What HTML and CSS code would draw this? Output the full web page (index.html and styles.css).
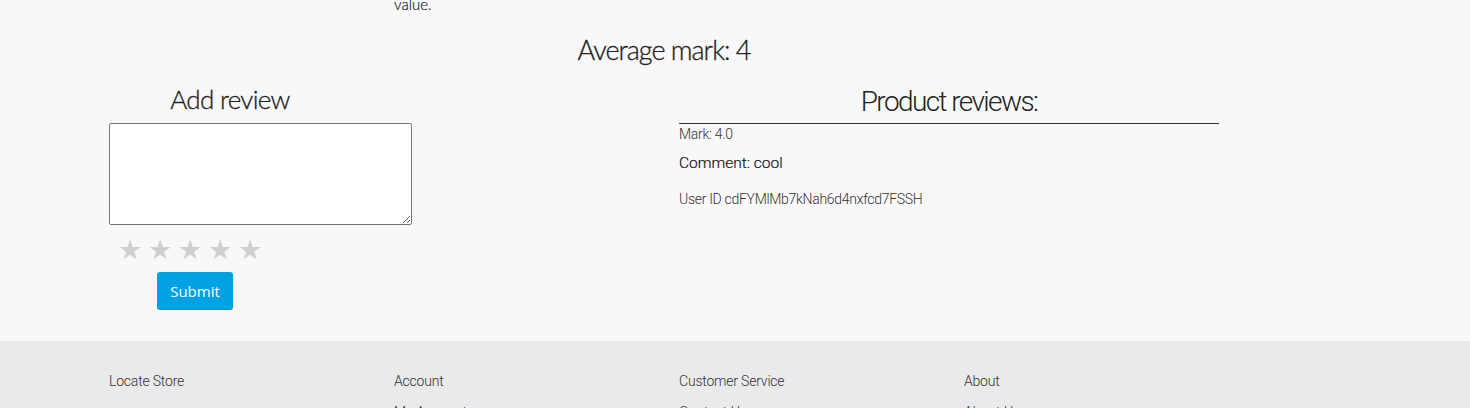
FILE: index.html
```html
<!DOCTYPE html>
<html>
<head>
<meta charset="utf-8">
<link rel="stylesheet" href="styles.css">
</head>
<body>
<main class="page">
  <div class="container">
    <div class="desc-row">
      <div class="desc-col"></div>
      <div class="desc-col"><p class="desc">value.</p></div>
    </div>
    <h2 class="avg">Average mark: 4</h2>
    <div class="review-row">
      <div class="col-left">
        <h3 class="add-title">Add review</h3>
        <textarea class="review-input"></textarea>
        <div class="stars"><span>★</span><span>★</span><span>★</span><span>★</span><span>★</span></div>
        <button class="submit">Submit</button>
      </div>
      <div class="col-right">
        <h3 class="reviews-title">Product reviews:</h3>
        <div class="review">
          <p class="mark">Mark: 4.0</p>
          <p class="comment">Comment: cool</p>
          <p class="user">User ID cdFYMlMb7kNah6d4nxfcd7FSSH</p>
        </div>
      </div>
    </div>
  </div>
</main>
<footer class="footer">
  <div class="container footer-cols">
    <div class="fcol"><h4>Locate Store</h4></div>
    <div class="fcol"><h4>Account</h4><a>My Account</a></div>
    <div class="fcol"><h4>Customer Service</h4><a>Contact Us</a></div>
    <div class="fcol"><h4>About</h4><a>About Us</a></div>
  </div>
</footer>
</body>
</html>
```

FILE: styles.css
```css
* { box-sizing: border-box; }
html, body { margin: 0; padding: 0; }
body {
  background: #f8f8f8;
  color: #333;
  font-family: "Open Sans", sans-serif;
  overflow: hidden;
  height: 408px;
}
.container {
  width: 1140px;
  margin-left: 94px;
}
.page { height: 341px; }
.desc-row { display: flex; height: 14px; }
.desc-col { width: 285px; padding: 0 15px; }
.desc {
  margin: -6px 0 0 0;
  font-family: "Lato", sans-serif;
  font-weight: 300;
  font-size: 15px;
  line-height: 20px;
  color: #222;
  -webkit-text-stroke: 0.2px #222;
}
.avg {
  margin: 18px 0 0 0;
  text-align: center;
  font-family: "Lato", sans-serif;
  font-weight: 300;
  font-size: 27px;
  line-height: 36px;
  letter-spacing: -1px;
  color: #222;
  -webkit-text-stroke: 0.3px #222;
}
.review-row { display: flex; margin-top: 14px; }
.col-left {
  width: 570px;
  padding: 0 15px;
  display: flex;
  flex-direction: column;
  align-items: flex-start;
}
.col-right { width: 570px; padding: 0 15px; }
.add-title {
  width: 242px;
  margin: 0 0 7px 0;
  text-align: center;
  font-family: "Lato", sans-serif;
  font-weight: 300;
  font-size: 26px;
  line-height: 34px;
  letter-spacing: -0.7px;
  color: #222;
  -webkit-text-stroke: 0.3px #222;
}
.review-input {
  width: 303px;
  height: 102px;
  margin: 0;
  border: 1px solid #767676;
  border-radius: 2px;
  background: #fff;
  resize: vertical;
}
.stars {
  display: flex;
  gap: 6px;
  margin: 9px 0 0 9px;
  color: #cfcfcf;
  font-size: 27px;
  line-height: 30px;
}
.submit {
  margin: 8px 0 0 48px;
  width: 76px;
  height: 38px;
  border: none;
  border-radius: 3px;
  background: #00a2e3;
  color: #fff;
  font-family: "Open Sans", sans-serif;
  font-size: 15px;
}
.reviews-title {
  margin: 0;
  height: 42px;
  padding-top: 5px;
  border-bottom: 1px solid #333;
  text-align: center;
  font-family: "Roboto", sans-serif;
  font-weight: 300;
  font-size: 28px;
  line-height: 30px;
  letter-spacing: -1.6px;
  color: #222;
}
.review p { margin: 0; color: #333; }
.mark {
  margin-top: 1px !important;
  font-family: "Roboto", sans-serif;
  font-weight: 300;
  font-size: 14px;
  line-height: 18px;
  letter-spacing: -0.3px;
}
.comment {
  margin-top: 10px !important;
  font-family: "Roboto", sans-serif;
  font-weight: 300;
  font-size: 15.5px;
  line-height: 20px;
  color: #111 !important;
  -webkit-text-stroke: 0.2px #111;
}
.user {
  margin-top: 17px !important;
  font-family: "Roboto", sans-serif;
  font-weight: 300;
  font-size: 14px;
  line-height: 18px;
  letter-spacing: -0.3px;
}
.footer {
  background: #e8eaec;
  height: 67px;
  padding-top: 30px;
}
.footer-cols { display: flex; }
.fcol {
  width: 285px;
  padding: 0 15px;
}
.fcol h4 {
  margin: 0;
  font-family: "Roboto", sans-serif;
  font-weight: 300;
  font-size: 14px;
  line-height: 20px;
  letter-spacing: -0.2px;
  color: #333;
}
.fcol a {
  display: block;
  margin-top: 11px;
  font-family: "Roboto", sans-serif;
  font-weight: 300;
  font-size: 14px;
  line-height: 20px;
  color: #333;
}
```
